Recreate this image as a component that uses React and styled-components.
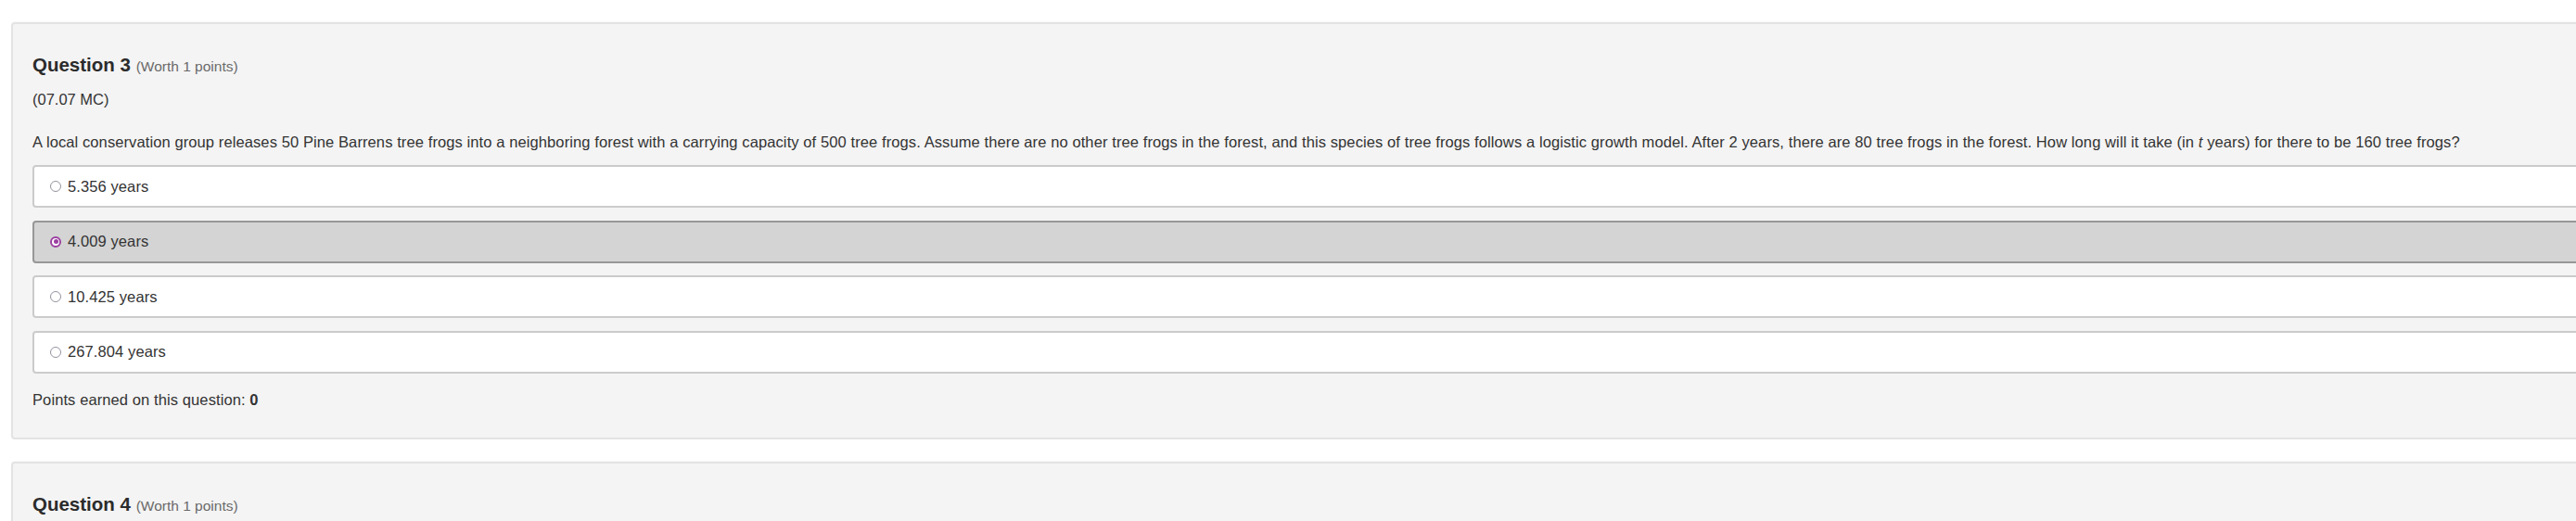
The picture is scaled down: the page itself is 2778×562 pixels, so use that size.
import styled, { createGlobalStyle } from "styled-components";

const GlobalStyle = createGlobalStyle`
  html, body {
    margin: 0;
    padding: 0;
    background: #fff;
    overflow: hidden;
  }
  body {
    font-family: "Liberation Sans", Arial, Helvetica, sans-serif;
    color: #333;
  }
`;

const questions = [
  {
    number: 3,
    worth: 1,
    code: "(07.07 MC)",
    selected: 1,
    options: ["5.356 years", "4.009 years", "10.425 years", "267.804 years"],
    earned: 0,
  },
  { number: 4, worth: 1 },
];

const Page = styled.div`
  padding: 24px 0 0 12px;
  display: flex;
  flex-direction: column;
  gap: 24px;
`;

const Card = styled.section`
  width: 2900px;
  background: #f4f4f4;
  border: 2px solid #e3e3e3;
  border-radius: 4px;
  box-shadow: 0 -1px 2px rgba(0, 0, 0, 0.04);
  padding: 31px 21px 29px;
  box-sizing: border-box;
`;

const Heading = styled.h2`
  margin: 0;
  font-size: 20.5px;
  line-height: 26px;
  font-weight: 700;
  color: #2b2b2b;
  span {
    font-size: 15.5px;
    font-weight: 400;
    color: #6a6a6a;
  }
`;

const Code = styled.div`
  margin-top: 10px;
  font-size: 16.5px;
  line-height: 24px;
`;

const Prompt = styled.p`
  margin: 22px 0 13px;
  font-size: 16.5px;
  letter-spacing: 0.1px;
  line-height: 24px;
`;

const Options = styled.div`
  display: flex;
  flex-direction: column;
  gap: 13.5px;
`;

const Option = styled.label`
  display: flex;
  align-items: center;
  height: 46px;
  box-sizing: border-box;
  padding-left: 17px;
  border: 2px solid ${(p) => (p.$active ? "#979797" : "#cbcbcb")};
  background: ${(p) => (p.$active ? "#d4d4d4" : "#fff")};
  border-radius: 4px;
  font-size: 16.5px;
  letter-spacing: 0.1px;
  color: #333;
`;

const Radio = styled.span`
  width: 12px;
  height: 12px;
  border-radius: 50%;
  box-sizing: border-box;
  margin-right: 7px;
  flex: none;
  background: #fff;
  border: ${(p) => (p.$on ? "2px solid #9b3fa0" : "1.5px solid #94949e")};
  display: flex;
  align-items: center;
  justify-content: center;
  &::after {
    content: "";
    display: ${(p) => (p.$on ? "block" : "none")};
    width: 5px;
    height: 5px;
    border-radius: 50%;
    background: #9b3fa0;
  }
`;

const Earned = styled.div`
  margin-top: 16px;
  font-size: 16.5px;
  letter-spacing: 0.1px;
  line-height: 24px;
  b {
    font-weight: 700;
  }
`;

export default function App() {
  return (
    <>
      <GlobalStyle />
      <Page>
        {questions.map((q) => (
          <Card key={q.number}>
            <Heading>
              Question {q.number} <span>(Worth {q.worth} points)</span>
            </Heading>
            {q.options && (
              <>
                <Code>{q.code}</Code>
                <Prompt>
                  A local conservation group releases 50 Pine Barrens tree frogs into a neighboring forest
                  with a carrying capacity of 500 tree frogs. Assume there are no other tree frogs in the
                  forest, and this species of tree frogs follows a logistic growth model. After 2 years,
                  there are 80 tree frogs in the forest. How long will it take (in <i>t</i> years) for
                  there to be 160 tree frogs?
                </Prompt>
                <Options>
                  {q.options.map((o, i) => (
                    <Option key={o} $active={i === q.selected}>
                      <Radio $on={i === q.selected} />
                      {o}
                    </Option>
                  ))}
                </Options>
                <Earned>
                  Points earned on this question: <b>{q.earned}</b>
                </Earned>
              </>
            )}
          </Card>
        ))}
      </Page>
    </>
  );
}
